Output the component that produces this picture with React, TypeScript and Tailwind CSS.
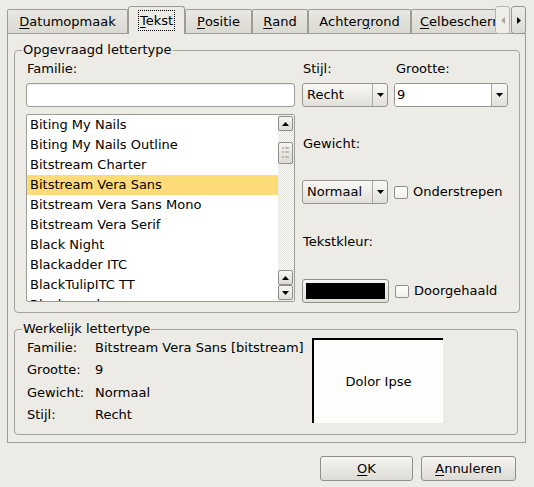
import React from 'react';

const fonts = [
  'Biting My Nails',
  'Biting My Nails Outline',
  'Bitstream Charter',
  'Bitstream Vera Sans',
  'Bitstream Vera Sans Mono',
  'Bitstream Vera Serif',
  'Black Night',
  'Blackadder ITC',
  'BlackTulipITC TT',
  'Blackwood',
];

function Down({ color = '#000' }: { color?: string }) {
  return (
    <svg width="7" height="4" viewBox="0 0 7 4">
      <path d="M0 0h7L3.5 4z" fill={color} />
    </svg>
  );
}

function Up({ color = '#000' }: { color?: string }) {
  return (
    <svg width="7" height="4" viewBox="0 0 7 4">
      <path d="M0 4h7L3.5 0z" fill={color} />
    </svg>
  );
}

function Combo({ label, w }: { label: string; w: string }) {
  return (
    <div
      className={`${w} h-[24px] flex border border-[#96958f] rounded-[3px] bg-gradient-to-b from-[#f9f8f5] to-[#e1e0da]`}
    >
      <div className="flex-1 pl-[4px] leading-[22px]">{label}</div>
      <div className="w-[15px] border-l border-[#a8a7a0] flex items-center justify-center">
        <Down />
      </div>
    </div>
  );
}

function Check({ label }: { label: string }) {
  return (
    <div className="flex items-center gap-[5px] ml-[6px]">
      <div className="w-[14px] h-[13px] border border-[#8f8e88] rounded-[2px] bg-gradient-to-b from-[#ffffff] to-[#f0efeb]" />
      <span>{label}</span>
    </div>
  );
}

function Tab({ w, active, children }: { w: string; active?: boolean; children: React.ReactNode }) {
  if (active) {
    return (
      <div
        className={`${w} shrink-0 h-[28px] border border-b-0 border-[#9d9c95] rounded-t-[3px] bg-[#edebe5] flex items-center justify-center pb-[1px]`}
      >
        <span className="border border-dotted border-black px-[1px] leading-[19px]">{children}</span>
      </div>
    );
  }
  return (
    <div
      className={`${w} shrink-0 h-[24px] mb-[1px] border border-b-0 border-[#9d9c95] rounded-t-[2px] bg-gradient-to-b from-[#e9e8e2] to-[#d9d8d1] flex items-center justify-center whitespace-nowrap`}
    >
      {children}
    </div>
  );
}

function ScrollBtn({ dir, h }: { dir: 'up' | 'down'; h: string }) {
  return (
    <div
      className={`${h} border border-[#8f8e88] rounded-[2px] bg-gradient-to-b from-[#f7f6f3] to-[#dedcd6] flex items-center justify-center`}
    >
      {dir === 'up' ? <Up /> : <Down />}
    </div>
  );
}

export default function App() {
  return (
    <div className="w-[534px] h-[487px] bg-[#edebe5] pt-[6px] pl-[7px] pr-[8px] text-[13px] text-black font-['DejaVu_Sans',sans-serif] overflow-hidden">
      {/* tab strip */}
      <div className="relative z-10 flex items-end h-[28px]">
        <div className="w-[488px] flex items-end overflow-hidden">
          <Tab w="w-[121px]">
            <u className="underline-offset-2">D</u>atumopmaak
          </Tab>
          <Tab w="w-[57px]" active>
            <u className="underline-offset-2">T</u>ekst
          </Tab>
          <Tab w="w-[67px]">
            <u className="underline-offset-2">P</u>ositie
          </Tab>
          <Tab w="w-[56px]">
            <u className="underline-offset-2">R</u>and
          </Tab>
          <Tab w="w-[103px]">
            Achter<u className="underline-offset-2">g</u>rond
          </Tab>
          <div className="w-[90px] shrink-0 h-[24px] mb-[1px] border border-b-0 border-[#9d9c95] rounded-t-[2px] bg-gradient-to-b from-[#e9e8e2] to-[#d9d8d1] flex items-center pl-[8px] whitespace-nowrap">
            <u className="underline-offset-2">C</u>elbescherming
          </div>
        </div>
        <div className="w-[15px] h-[28px] border border-[#b5b4ad] rounded-[3px] bg-[#efeee9] flex items-center justify-center">
          <svg width="4" height="7" viewBox="0 0 4 7">
            <path d="M4 0v7L0 3.5z" fill="#a9a8a2" />
          </svg>
        </div>
        <div className="w-[15px] h-[28px] ml-[1px] border border-[#96958f] rounded-[3px] bg-gradient-to-b from-[#eeede8] to-[#dcdbd5] flex items-center justify-center">
          <svg width="4" height="7" viewBox="0 0 4 7">
            <path d="M0 0v7l4-3.5z" fill="#000" />
          </svg>
        </div>
      </div>

      {/* panel */}
      <div className="-mt-[1px] h-[410px] border border-[#9d9c95] pt-[9px] pl-[6px] pr-[7px]">
        <fieldset className="h-[270px] border border-[#a4a39c] rounded-[4px] px-[11px]">
          <legend className="-ml-[4px] px-[1px] leading-[14px]">Opgevraagd lettertype</legend>
          <div className="flex pt-[5px]">
            {/* family column */}
            <div className="w-[269px] flex flex-col">
              <div className="h-[14px] leading-[14px] pl-[1px]">Familie:</div>
              <div className="mt-[7px] h-[24px] bg-white border border-[#9d9c95] rounded-[3px] shadow-[inset_0_1px_1px_rgba(0,0,0,0.08)]" />
              <div className="mt-[7px] h-[188px] bg-white border border-[#9d9c95] rounded-[2px] flex overflow-hidden">
                <div className="flex-1 overflow-hidden">
                  {fonts.map((f) => (
                    <div
                      key={f}
                      className={`h-[20px] leading-[20px] pl-[3px] whitespace-nowrap ${
                        f === 'Bitstream Vera Sans' ? 'bg-[#fddb76]' : ''
                      }`}
                    >
                      {f}
                    </div>
                  ))}
                </div>
                <div className="w-[16px] flex flex-col pr-[1px] bg-[length:2px_2px] bg-[image:repeating-conic-gradient(#e3e2dc_0%_25%,#fbfbf9_0%_50%)]">
                  <div className="mt-[1px]">
                    <ScrollBtn dir="up" h="h-[15px]" />
                  </div>
                  <div className="mt-[11px] h-[22px] border border-[#8f8e88] rounded-[2px] bg-gradient-to-b from-[#f5f4f0] to-[#dcdbd5] grid grid-cols-3 gap-[1px] px-[3px] py-[4px]">
                    {Array.from({ length: 9 }).map((_, i) => (
                      <div key={i} className="w-[2px] h-[2px] bg-[#bdbcb6]" />
                    ))}
                  </div>
                  <div className="flex-1" />
                  <div className="mb-[1px] flex flex-col">
                    <ScrollBtn dir="up" h="h-[15px]" />
                    <ScrollBtn dir="down" h="h-[15px]" />
                  </div>
                </div>
              </div>
            </div>

            {/* style / size column */}
            <div className="ml-[7px] flex flex-col">
              <div className="flex h-[14px] leading-[14px]">
                <div className="w-[86px] pl-[1px]">Stijl:</div>
                <div className="ml-[6px] pl-[2px]">Grootte:</div>
              </div>
              <div className="mt-[7px] flex">
                <Combo label="Recht" w="w-[86px]" />
                <div className="ml-[6px] w-[114px] h-[24px] flex border border-[#96958f] rounded-[3px] overflow-hidden">
                  <div className="flex-1 bg-white pl-[2px] leading-[22px]">9</div>
                  <div className="w-[16px] border-l border-[#a8a7a0] bg-gradient-to-b from-[#f9f8f5] to-[#e1e0da] flex items-center justify-center">
                    <Down />
                  </div>
                </div>
              </div>
              <div className="mt-[30px] h-[14px] leading-[14px] pl-[1px]">Gewicht:</div>
              <div className="mt-[29px] flex items-center">
                <Combo label="Normaal" w="w-[86px]" />
                <Check label="Onderstrepen" />
              </div>
              <div className="mt-[31px] h-[14px] leading-[14px] pl-[1px]">Tekstkleur:</div>
              <div className="mt-[30px] flex items-center">
                <div className="w-[87px] h-[24px] border border-[#8f8e88] rounded-[3px] bg-gradient-to-b from-[#f7f6f3] to-[#e0dfd9] p-[3px]">
                  <div className="w-full h-full bg-black" />
                </div>
                <Check label="Doorgehaald" />
              </div>
            </div>
          </div>
        </fieldset>

        <fieldset className="mt-[9px] h-[113px] border border-[#a4a39c] rounded-[4px] px-[11px]">
          <legend className="-ml-[4px] px-[1px] leading-[14px]">Werkelijk lettertype</legend>
          <div className="flex">
            <div className="w-[286px] flex flex-col">
              {[
                ['Familie:', 'Bitstream Vera Sans [bitstream]'],
                ['Grootte:', '9'],
                ['Gewicht:', 'Normaal'],
                ['Stijl:', 'Recht'],
              ].map(([k, v]) => (
                <div key={k} className="h-[22.5px] flex items-center whitespace-nowrap">
                  <div className="w-[69px] pl-[1px]">{k}</div>
                  <div>{v}</div>
                </div>
              ))}
            </div>
            <div className="mt-[2px] w-[131px] h-[85px] bg-[#fdfdfb] border-t-2 border-l-2 border-black flex items-center justify-center">
              Dolor Ipse
            </div>
          </div>
        </fieldset>
      </div>

      {/* buttons */}
      <div className="mt-[13px] flex justify-end gap-[8px] pr-[10px]">
        <button className="w-[93px] h-[25px] border border-[#8f8e88] rounded-[3px] bg-gradient-to-b from-[#f6f5f2] to-[#dcdbd5]">
          <u className="underline-offset-2">O</u>K
        </button>
        <button className="w-[95px] h-[25px] border border-[#8f8e88] rounded-[3px] bg-gradient-to-b from-[#f6f5f2] to-[#dcdbd5]">
          <u className="underline-offset-2">A</u>nnuleren
        </button>
      </div>
    </div>
  );
}
